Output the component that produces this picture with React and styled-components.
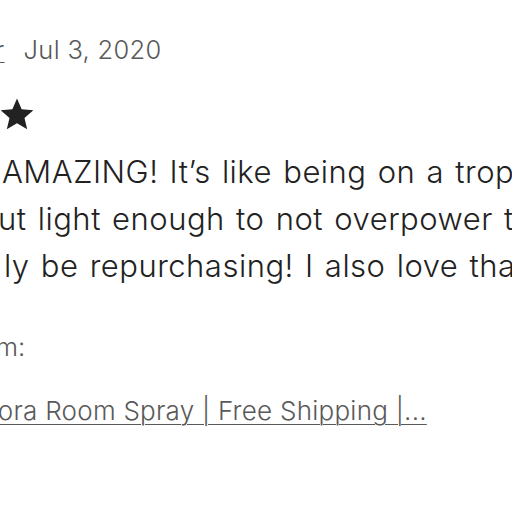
import React from "react";
import styled, { createGlobalStyle } from "styled-components";

const Global = createGlobalStyle`
  html, body { margin: 0; padding: 0; background: #ffffff; overflow: hidden; }
  body { font-family: "Inter", "Liberation Sans", sans-serif; }
`;

const Review = styled.article`
  width: 512px;
  height: 512px;
  overflow: hidden;
  padding-top: 32px;
  box-sizing: border-box;
`;

const Meta = styled.div`
  display: flex;
  align-items: baseline;
  gap: 19px;
  font-size: 25.5px;
  font-weight: 350;
  letter-spacing: 0.3px;
  line-height: 36px;
  color: #595959;
  margin-left: -92px;
`;

const Reviewer = styled.a`
  color: #595959;
  text-decoration: underline;
  text-underline-offset: 3px;
  text-decoration-thickness: 1px;
`;

const Stars = styled.div`
  display: flex;
  gap: 4px;
  margin-top: 28px;
  margin-left: -161px;
`;

const Body = styled.p`
  margin: 16px 0 0;
  font-size: 31px;
  font-weight: 350;
  letter-spacing: 0.5px;
  word-spacing: 2px;
  line-height: 47px;
  color: #222222;
  white-space: nowrap;
`;

const Line = styled.span`
  display: block;
  margin-left: ${(p) => p.$offset}px;
`;

const Label = styled.div`
  margin-top: 40px;
  font-size: 25.5px;
  font-weight: 350;
  line-height: 36px;
  color: #595959;
  margin-left: -166px;
`;

const ItemLink = styled.a`
  display: block;
  margin-top: 28px;
  font-size: 26px;
  font-weight: 350;
  letter-spacing: 0.25px;
  line-height: 36px;
  color: #595959;
  white-space: nowrap;
  text-decoration: underline;
  text-underline-offset: 4px;
  text-decoration-thickness: 1px;
  margin-left: -24px;
`;

const Star = () => (
  <svg width="36" height="36" viewBox="0 0 24 24" aria-hidden="true">
    <path
      d="M12 1.6l3.1 7.2 7.8.7-5.9 5.1 1.8 7.6L12 18.2l-6.8 4 1.8-7.6-5.9-5.1 7.8-.7z"
      fill="#222222"
    />
  </svg>
);

export default function App() {
  return (
    <>
      <Global />
      <Review>
        <Meta>
          <Reviewer href="#">Heather</Reviewer>
          <span>Jul 3, 2020</span>
        </Meta>
        <Stars>
          <Star />
          <Star />
          <Star />
          <Star />
          <Star />
        </Stars>
        <Body>
          <Line $offset={2}>AMAZING! It’s like being on a tropical island</Line>
          <Line $offset={-2}>ut light enough to not overpower the room</Line>
          <Line $offset={4}>ly be repurchasing! I also love that</Line>
        </Body>
        <Label>Purchased item:</Label>
        <ItemLink href="#">Flora Room Spray | Free Shipping |...</ItemLink>
      </Review>
    </>
  );
}
